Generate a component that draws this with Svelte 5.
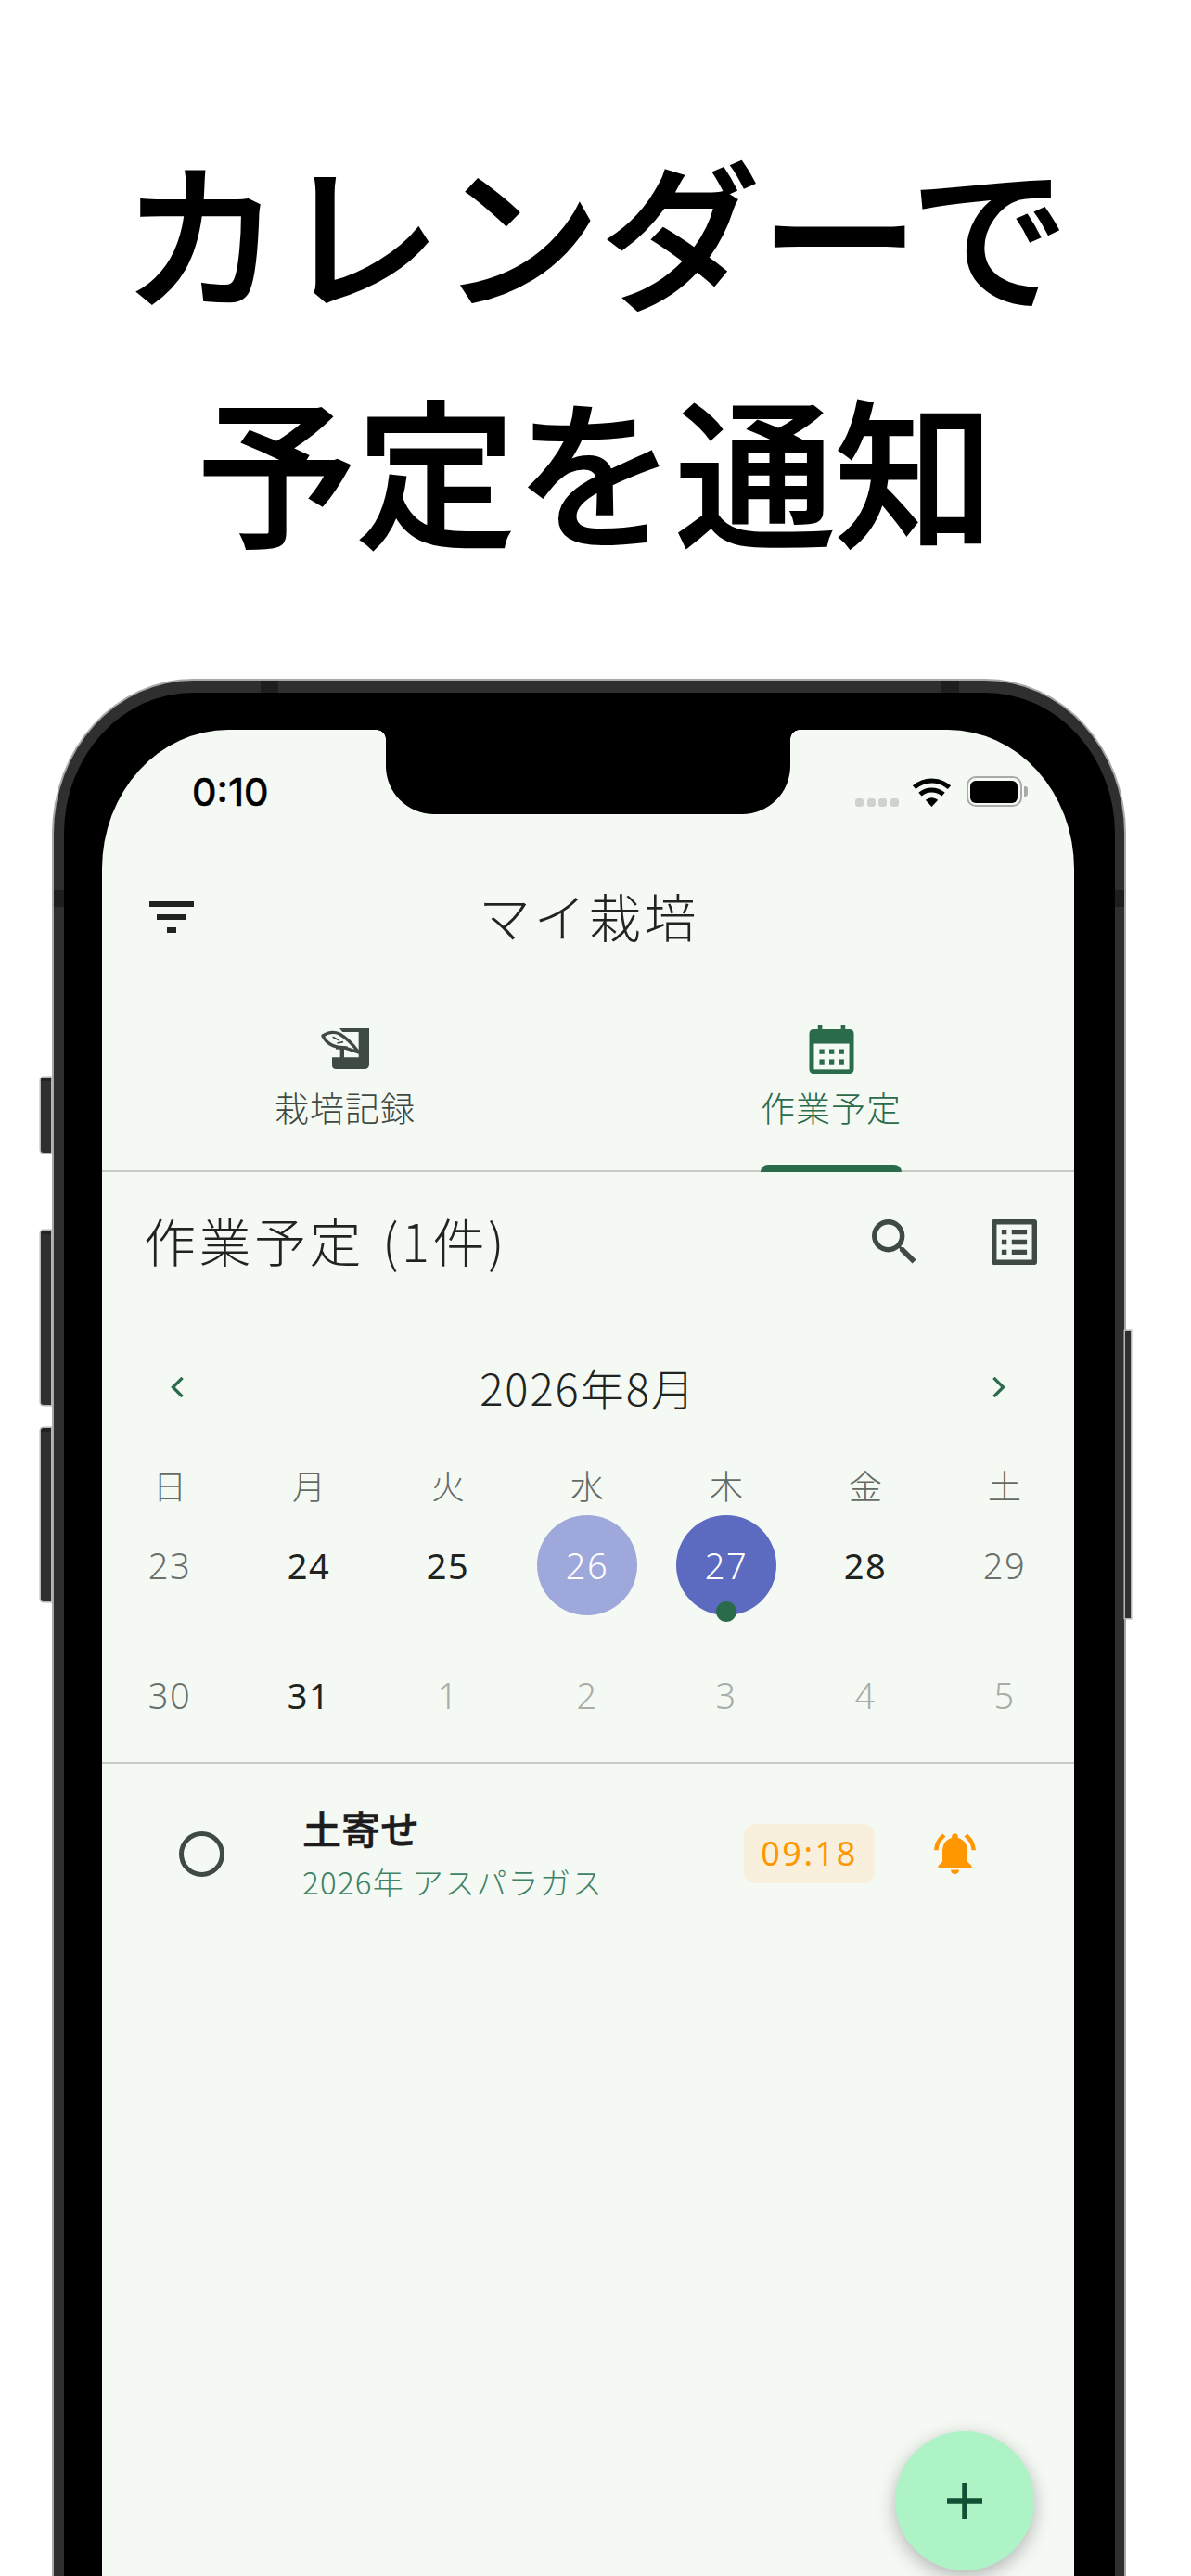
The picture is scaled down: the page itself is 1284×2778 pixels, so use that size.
<script>
  const weekdays = ['日','月','火','水','木','金','土'];
  const days = [
    {n:23,c:'mute'},{n:24,c:'dark'},{n:25,c:'dark'},{n:26,c:'sel'},{n:27,c:'today'},{n:28,c:'dark'},{n:29,c:'mute'},
    {n:30,c:'mute'},{n:31,c:'dark'},{n:1,c:'off'},{n:2,c:'off'},{n:3,c:'off'},{n:4,c:'off'},{n:5,c:'off'}
  ];
</script>

<div class="page">
  <h1>カレンダーで<br />予定を通知</h1>

  <div class="device">
    <span class="btn b1"></span><span class="btn b2"></span><span class="btn b3"></span><span class="btn b4"></span>
    <span class="band bt1"></span><span class="band bt2"></span><span class="band bl"></span><span class="band br"></span>

    <div class="screen">
      <div class="notch"><i class="fl"></i><i class="fr"></i></div>

      <div class="status">
        <span class="time">0:10</span>
        <div class="indicators">
          <div class="signal"><i></i><i></i><i></i><i></i></div>
          <svg class="wifi" viewBox="0 0 43 34">
            <path d="M21.5 34 14.6 26.6a10.5 10.5 0 0 1 13.8 0Z" fill="#000"/>
            <path d="M8.6 20.2a19.6 19.6 0 0 1 25.8 0" fill="none" stroke="#000" stroke-width="5.2"/>
            <path d="M2 12.6a29.5 29.5 0 0 1 39 0" fill="none" stroke="#000" stroke-width="5.2"/>
          </svg>
          <div class="battery"><i></i></div>
          <span class="nub"></span>
        </div>
      </div>

      <header class="appbar">
        <div class="filter"><i></i><i></i><i></i></div>
        <span class="title">マイ栽培</span>
      </header>

      <nav class="tabs">
        <div class="tab">
          <svg class="ic-plant" viewBox="255 88 153 132">
            <path d="M312 88H408V205Q408 220 392 220H302Q288 220 288 207V182H374V100H322Z" fill="#3f4a42"/>
            <path d="M258 112Q285 94 312 106Q345 125 374 166L326 150Q276 150 258 112Z" fill="#f5f9f4" stroke="#3f4a42" stroke-width="10" stroke-linejoin="round"/>
            <path d="M290 116 310 126M304 136 324 132" stroke="#3f4a42" stroke-width="5" fill="none"/>
            <rect x="314" y="146" width="13" height="38" fill="#3f4a42"/>
            <rect x="300" y="146" width="38" height="10" fill="#3f4a42"/>
          </svg>
          <span class="tab-label">栽培記録</span>
        </div>
        <div class="tab active">
          <svg class="ic-cal" viewBox="0 0 145 160">
            <path d="M28 0h14v15h61V0h14v15h13q15 0 15 15v115q0 15-15 15H15q-15 0-15-15V30q0-15 15-15h13Z" fill="#2a6b4c"/>
            <rect x="15" y="62" width="115" height="84" fill="#f5f9f4"/>
            <g fill="#2a6b4c">
              <rect x="33" y="80" width="16" height="16"/><rect x="65" y="80" width="16" height="16"/><rect x="97" y="80" width="16" height="16"/>
              <rect x="33" y="113" width="16" height="16"/><rect x="65" y="113" width="16" height="16"/><rect x="97" y="113" width="16" height="16"/>
            </g>
          </svg>
          <span class="tab-label">作業予定</span>
          <span class="indicator"></span>
        </div>
      </nav>

      <section class="section">
        <span class="section-title">作業予定 (1件)</span>
        <div class="section-icons">
          <svg class="ic" viewBox="3 3 18 18"><path d="M15.5 14h-.79l-.28-.27A6.47 6.47 0 0 0 16 9.5 6.5 6.5 0 1 0 9.5 16c1.61 0 3.09-.59 4.23-1.57l.27.28v.79l5 4.99L20.49 19l-4.99-5zm-6 0C7.01 14 5 11.99 5 9.5S7.01 5 9.5 5 14 7.01 14 9.5 11.99 14 9.5 14z" fill="#3f4a42"/></svg>
          <svg class="ic" viewBox="3 3 18 18"><path d="M19 5v14H5V5h14m1.1-2H3.9c-.5 0-.9.4-.9.9v16.2c0 .4.4.9.9.9h16.2c.4 0 .9-.5.9-.9V3.9c0-.5-.5-.9-.9-.9zM11 7h6v2h-6V7zm0 4h6v2h-6v-2zm0 4h6v2h-6zM7 7h2v2H7zm0 4h2v2H7zm0 4h2v2H7z" fill="#3f4a42"/></svg>
        </div>
      </section>

      <div class="cal-head">
        <svg class="chev" viewBox="0 0 16 24"><path d="M13 3 4 12l9 9" fill="none" stroke="#2a6b4c" stroke-width="3"/></svg>
        <span class="month">2026年8月</span>
        <svg class="chev" viewBox="0 0 16 24"><path d="M3 3l9 9-9 9" fill="none" stroke="#2a6b4c" stroke-width="3"/></svg>
      </div>

      <div class="weekdays">
        {#each weekdays as w}<span>{w}</span>{/each}
      </div>

      <div class="days">
        {#each days as d}
          <div class="day {d.c}"><span class="num">{d.n}</span>{#if d.c === 'today'}<i class="dot"></i>{/if}</div>
        {/each}
      </div>

      <div class="item">
        <span class="radio"></span>
        <div class="item-text">
          <span class="item-title">土寄せ</span>
          <span class="item-sub">2026年 アスパラガス</span>
        </div>
        <span class="chip">09:18</span>
        <svg class="bell" viewBox="2 2.4 20 19.6"><path d="M7.58 4.08 6.15 2.65C3.75 4.48 2.17 7.3 2.03 10.5h2c.15-2.65 1.51-4.97 3.55-6.42zm12.39 6.42h2c-.15-3.2-1.73-6.02-4.12-7.85l-1.42 1.43c2.02 1.45 3.39 3.77 3.54 6.42zM18 11c0-3.07-1.64-5.64-4.5-6.32V4c0-.83-.67-1.5-1.5-1.5s-1.5.67-1.5 1.5v.68C7.63 5.36 6 7.92 6 11v5l-2 2v1h16v-1l-2-2v-5zm-6 11c.14 0 .27-.01.4-.04.65-.14 1.18-.58 1.44-1.18.1-.24.15-.5.15-.78h-4c.01 1.1.9 2 2.01 2z" fill="#ff9800"/></svg>
      </div>

      <button class="fab" aria-label="追加"><svg viewBox="0 0 38 38"><path d="M19 0v38M0 19h38" stroke="#0f5132" stroke-width="5.5" fill="none"/></svg></button>
    </div>
  </div>
</div>

<style>
  :global(body) { margin: 0; background: #fff; }
  .page {
    position: relative;
    width: 1284px;
    height: 2778px;
    overflow: hidden;
    background: #fff;
    font-family: "Noto Sans CJK JP", "Noto Sans", sans-serif;
  }
  h1 {
    margin: 0;
    height: 734px;
    box-sizing: border-box;
    padding-top: 118px;
    text-align: center;
    font-size: 172px;
    line-height: 256px;
    font-weight: 500;
    color: #000;
    white-space: nowrap;
    -webkit-text-stroke: 2px #000;
  }
  .device {
    position: relative;
    margin-left: 58px;
    width: 1154px;
    height: 2300px;
    box-sizing: border-box;
    background: #000;
    border: solid #2f2f2f;
    border-width: 13px 10px 0 11px;
    border-radius: 150px 150px 0 0 / 165px 165px 0 0;
    box-shadow: 0 0 0 2px #a8a8a8;
    padding: 40px 44px 0 41px;
  }
  .btn {
    position: absolute;
    background: #2f2f2f;
    box-shadow: 0 0 0 1.5px #b8b8b8;
    border-top: 4px solid #222;
    box-sizing: border-box;
  }
  .b1 { left: -25px; top: 415px; width: 11px; height: 81px; border-radius: 3px 0 0 3px; }
  .b2 { left: -25px; top: 580px; width: 11px; height: 188px; border-radius: 3px 0 0 3px; }
  .b3 { left: -25px; top: 793px; width: 11px; height: 187px; border-radius: 3px 0 0 3px; }
  .b4 { right: -17px; top: 688px; width: 6px; height: 310px; border-top: 0; }
  .band { position: absolute; background: #1e1e1e; }
  .bt1 { top: -13px; left: 212px; width: 19px; height: 13px; }
  .bt2 { top: -13px; right: 168px; width: 19px; height: 13px; }
  .bl { left: -11px; top: 213px; width: 11px; height: 18px; }
  .br { right: -10px; top: 213px; width: 10px; height: 18px; }

  .screen {
    position: relative;
    width: 1048px;
    height: 2240px;
    background: #f5f9f4;
    border-radius: 136px 136px 0 0 / 150px 150px 0 0;
    color: #1f2420;
  }
  .notch {
    position: absolute;
    left: 306px;
    top: 0;
    width: 436px;
    height: 91px;
    background: #000;
    border-radius: 0 0 52px 52px;
  }
  .notch i {
    position: absolute;
    top: 0;
    width: 10px;
    height: 10px;
    background: radial-gradient(circle at 0 100%, transparent 9.5px, #000 10px);
  }
  .notch .fl { left: -10px; }
  .notch .fr { right: -10px; transform: scaleX(-1); }

  .status {
    position: relative;
    height: 130px;
  }
  .time {
    position: absolute;
    left: 97px;
    top: 43px;
    font-family: Inter, sans-serif;
    font-weight: 500;
    font-size: 41px;
    line-height: 48px;
    color: #000;
    -webkit-text-stroke: 0.4px #000;
  }
  .indicators {
    position: absolute;
    left: 812px;
    top: 50px;
    display: flex;
    align-items: center;
    height: 33px;
  }
  .signal {
    display: flex;
    gap: 3.5px;
    align-self: flex-end;
  }
  .signal i {
    width: 9px;
    height: 9px;
    background: #cfd1ce;
    border-radius: 3px;
  }
  .wifi { width: 43px; height: 33px; margin-left: 14px; }
  .battery {
    box-sizing: border-box;
    width: 60px;
    height: 33px;
    margin-left: 16px;
    border: 2.5px solid #a9aba8;
    border-radius: 10px;
    padding: 2.5px;
  }
  .battery i {
    display: block;
    height: 100%;
    background: #000;
    border-radius: 6px;
  }
  .nub {
    width: 4px;
    height: 11px;
    margin-left: 2px;
    background: #a9aba8;
    border-radius: 0 3px 3px 0;
  }

  .appbar {
    position: relative;
    height: 146px;
    display: flex;
    align-items: center;
    justify-content: center;
  }
  .filter {
    position: absolute;
    left: 51px;
    top: 55px;
    width: 48px;
    height: 34px;
    display: flex;
    flex-direction: column;
    align-items: center;
    justify-content: space-between;
  }
  .filter i { display: block; height: 6px; background: #1f2420; }
  .filter i:nth-child(1) { width: 48px; }
  .filter i:nth-child(2) { width: 32px; }
  .filter i:nth-child(3) { width: 10px; }
  .title {
    font-size: 56px;
    line-height: 70px;
    font-weight: 300;
    color: #1f2420;
    letter-spacing: 3.5px;
    margin: -6px 0 0 2px;
  }

  .tabs {
    display: grid;
    grid-template-columns: 1fr 1fr;
    height: 201px;
    box-sizing: border-box;
    border-bottom: 2px solid #c6cbc5;
  }
  .tab {
    position: relative;
    display: flex;
    flex-direction: column;
    align-items: center;
    color: #414942;
  }
  .tab .ic-plant { width: 53px; height: 44px; margin-top: 46px; }
  .tab .ic-cal { width: 49px; height: 53px; margin-top: 42px; }
  .tab-label {
    font-size: 37px;
    line-height: 48px;
    font-weight: 300;
    letter-spacing: 1px;
    position: absolute;
    top: 107px;
  }
  .tab.active { color: #2a6b4c; }
  .indicator {
    position: absolute;
    bottom: -2px;
    width: 152px;
    height: 8px;
    background: #2a6b4c;
    border-radius: 8px 8px 0 0;
  }

  .section {
    height: 150px;
    display: flex;
    align-items: center;
    justify-content: space-between;
    padding: 0 40px 0 45px;
  }
  .section-title {
    font-size: 56px;
    line-height: 70px;
    font-weight: 300;
    letter-spacing: 3.5px;
    word-spacing: 3px;
    margin-top: -5px;
  }
  .section-icons { display: flex; gap: 80px; align-items: center; }
  .ic { width: 49px; height: 49px; display: block; }

  .cal-head {
    height: 169px;
    display: flex;
    align-items: center;
    justify-content: space-between;
    padding: 0 72px 6px 72px;
    box-sizing: border-box;
  }
  .chev { width: 18px; height: 28px; }
  .month { font-size: 47px; line-height: 60px; font-weight: 300; letter-spacing: 2px; color: #1f2420; }

  .weekdays {
    display: grid;
    grid-template-columns: repeat(7, 150px);
    width: 1050px;
    height: 40px;
    margin: -2px 0 2px -2px;
    text-align: center;
    font-size: 36px;
    line-height: 40px;
    font-weight: 300;
    color: #646a65;
  }
  .days {
    display: grid;
    grid-template-columns: repeat(7, 150px);
    grid-auto-rows: 130px;
    row-gap: 10px;
    width: 1050px;
    margin-left: -2px;
    padding-bottom: 7px;
  }
  .day {
    position: relative;
    display: flex;
    align-items: center;
    justify-content: center;
    font-size: 38px;
    font-weight: 300;
    letter-spacing: 1.5px;
    font-family: "Noto Sans", sans-serif;
  }
  .num {
    width: 108px;
    height: 108px;
    display: flex;
    align-items: center;
    justify-content: center;
    border-radius: 50%;
  }
  .day.dark { color: #1f2420; font-weight: 400; }
  .day.mute { color: #6a706b; }
  .day.off { color: #a8ada9; }
  .day.sel .num { background: #9fa8da; color: #fff; }
  .day.today .num { background: #5c6bc0; color: #fff; }
  .dot {
    position: absolute;
    left: 64px;
    top: 104px;
    width: 22px;
    height: 22px;
    border-radius: 50%;
    background: #2a6b4c;
  }

  .item {
    position: relative;
    height: 192px;
    box-sizing: border-box;
    border-top: 2px solid #c6cbc5;
    display: flex;
    align-items: center;
    padding-left: 83px;
    padding-top: 4px;
  }
  .radio {
    width: 49px;
    height: 49px;
    box-sizing: border-box;
    border: 5px solid #3f4a42;
    border-radius: 50%;
    flex: none;
  }
  .item-text {
    margin-left: 84px;
    margin-top: -4px;
    width: 476px;
    display: flex;
    flex-direction: column;
  }
  .item-title { font-size: 42px; line-height: 56px; font-weight: 500; color: #1c1c1e; -webkit-text-stroke: 0.5px #1c1c1e; }
  .item-sub {
    font-size: 33px;
    line-height: 44px;
    font-weight: 300;
    color: #3f8266;
    margin-top: 8px;
    letter-spacing: 1.3px;
    white-space: nowrap;
  }
  .chip {
    width: 141px;
    height: 64px;
    margin-top: 0;
    background: #f8f0dc;
    border-radius: 12px;
    color: #ff9800;
    font-family: "Noto Sans", sans-serif;
    font-size: 36px;
    line-height: 64px;
    text-align: center;
    letter-spacing: 2.5px;
  }
  .bell { width: 45px; height: 44px; margin-left: 64px; }

  .fab {
    position: absolute;
    left: 855px;
    top: 1835px;
    width: 150px;
    height: 150px;
    padding: 56px;
    border: 0;
    border-radius: 50%;
    background: #aef3c6;
    box-shadow: 0 6px 20px rgba(0, 0, 0, 0.28);
    box-sizing: border-box;
  }
  .fab svg { display: block; width: 38px; height: 38px; }
</style>
